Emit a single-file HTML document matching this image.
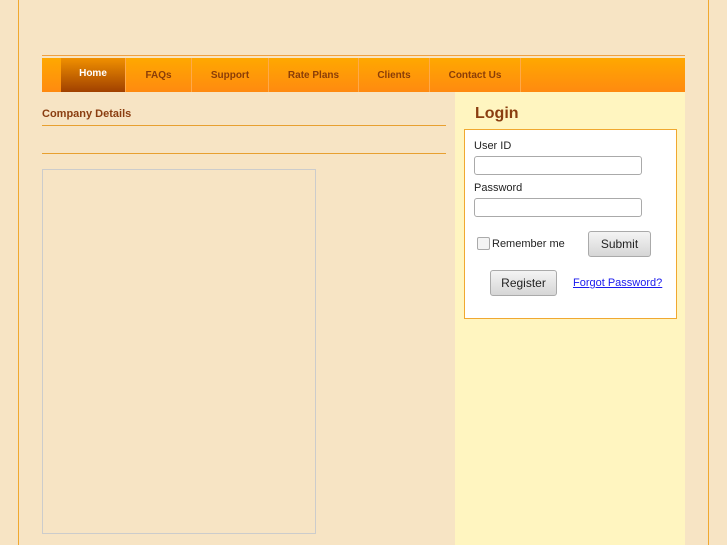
<html><head><style>
body{margin:0;width:727px;height:545px;background:#f7e4c4;font-family:"Liberation Sans",sans-serif;position:relative;overflow:hidden}
.a{position:absolute}
.tab{position:absolute;top:58px;height:34px;line-height:36px;text-align:center;font-size:10px;font-weight:bold;color:#8a3d08;border-right:1px solid #ffa94a}
input[type=text]{position:absolute;width:168px;height:19px;border:1px solid #aaa;border-radius:3px;background:#fff;box-sizing:border-box}
.btn{position:absolute;border:1px solid #aaa;border-radius:3px;background:linear-gradient(#f4f4f4,#d6d6d6);font-size:12px;text-align:center;color:#222;box-sizing:border-box}
</style></head><body>
<div class="a" style="left:18px;top:0;width:1px;height:545px;background:#f0a830"></div>
<div class="a" style="left:708px;top:0;width:1px;height:545px;background:#f0a830"></div>
<div class="a" style="left:42px;top:55px;width:643px;height:1px;background:#f0a040"></div>
<div class="a" style="left:42px;top:58px;width:643px;height:34px;background:linear-gradient(#ffa800,#ff8a10)"></div>
<div class="tab" style="left:61px;width:64px;background:linear-gradient(#f09000,#a04000);color:#fff;line-height:31px">Home</div>
<div class="tab" style="left:126px;width:65px">FAQs</div>
<div class="tab" style="left:192px;width:76px">Support</div>
<div class="tab" style="left:269px;width:89px">Rate Plans</div>
<div class="tab" style="left:359px;width:70px">Clients</div>
<div class="tab" style="left:430px;width:90px">Contact Us</div>
<div class="a" style="left:42px;top:108px;font-size:11px;font-weight:bold;color:#8a3d10">Company Details</div>
<div class="a" style="left:42px;top:125px;width:404px;height:1px;background:#e8a030"></div>
<div class="a" style="left:42px;top:153px;width:404px;height:1px;background:#e8a030"></div>
<div class="a" style="left:42px;top:169px;width:272px;height:363px;border:1px solid #ccc"></div>
<div class="a" style="left:455px;top:92px;width:230px;height:453px;background:#fff5c0"></div>
<div class="a" style="left:475px;top:105px;font-size:16px;font-weight:bold;color:#8a3d10">Login</div>
<div class="a" style="left:464px;top:129px;width:211px;height:188px;background:#fff;border:1px solid #f0a830"></div>
<div class="a" style="left:474px;top:140px;font-size:11px;color:#222">User ID</div>
<input type="text" style="left:474px;top:156px">
<div class="a" style="left:474px;top:182px;font-size:11px;color:#222">Password</div>
<input type="text" style="left:474px;top:198px">
<div class="a" style="left:477px;top:237px;width:11px;height:11px;border:1px solid #aaa;border-radius:2px;background:#f4f4f4"></div>
<div class="a" style="left:492px;top:238px;font-size:11px;color:#222">Remember me</div>
<div class="btn" style="left:588px;top:231px;width:63px;height:26px;line-height:24px">Submit</div>
<div class="btn" style="left:490px;top:270px;width:67px;height:26px;line-height:24px">Register</div>
<div class="a" style="left:573px;top:277px;font-size:11px;color:#1a1aee;text-decoration:underline">Forgot Password?</div>
</body></html>
